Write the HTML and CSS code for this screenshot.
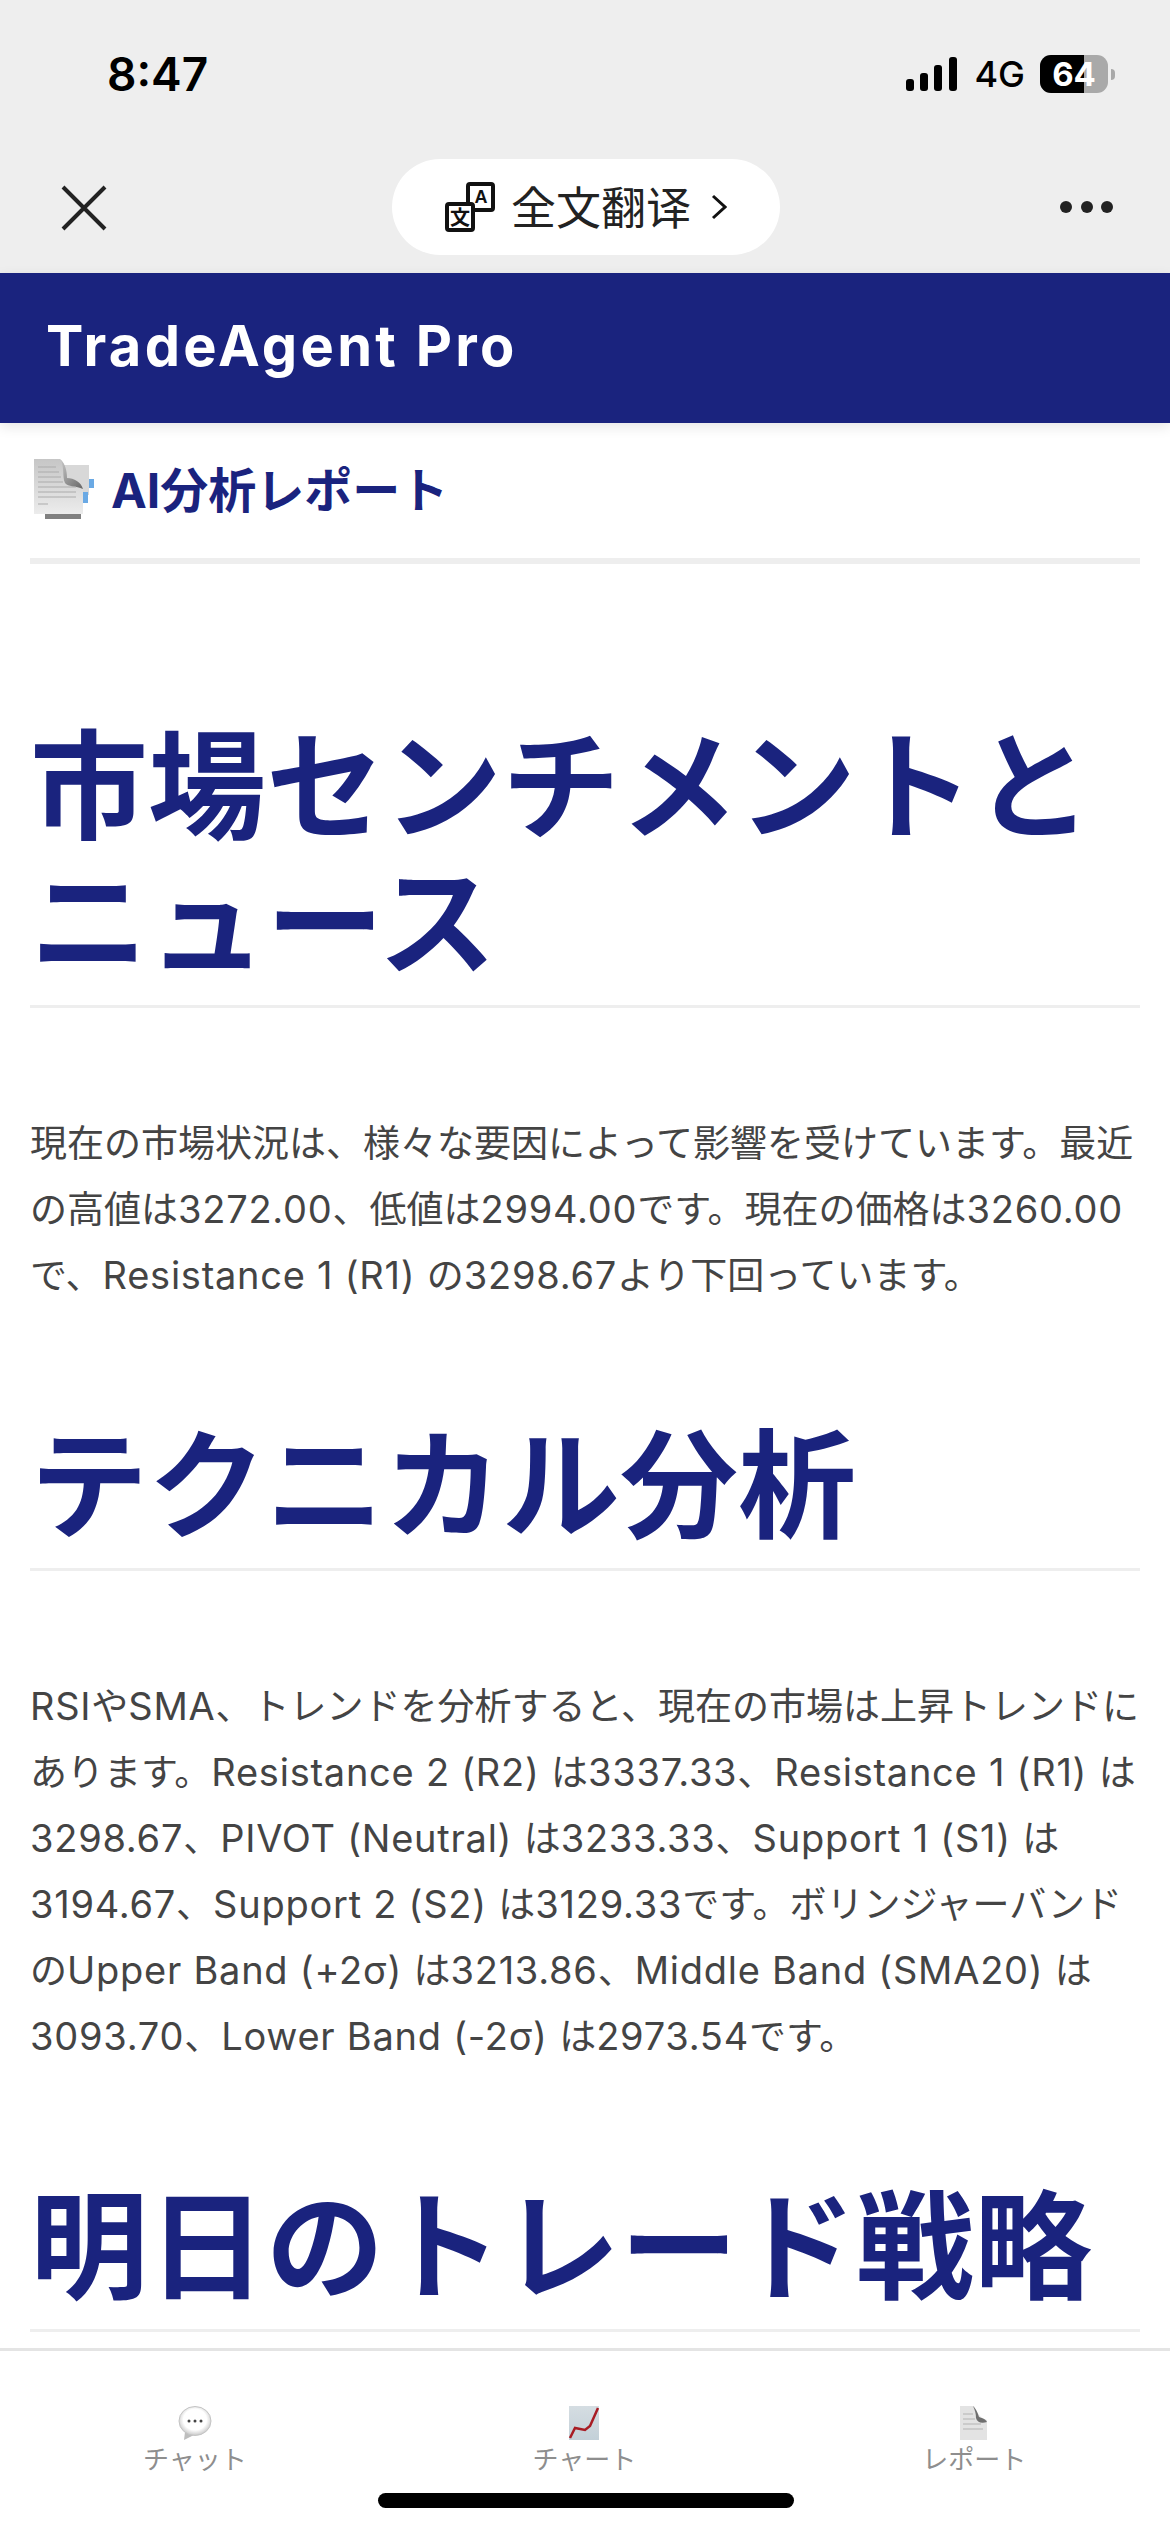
FILE: index.html
```html
<!DOCTYPE html>
<html lang="ja">
<head>
    <meta charset="UTF-8">
    <meta name="viewport" content="width=device-width, initial-scale=1.0">
    <title>TradeAgent Pro</title>
    <link rel="stylesheet" href="styles.css">
</head>
<body>
    <svg class="defs" width="0" height="0">
        <defs>
            <linearGradient id="paper" x1="0" y1="0" x2="0" y2="1">
                <stop offset="0" stop-color="#c6c6c6"/>
                <stop offset="1" stop-color="#ececec"/>
            </linearGradient>
            <linearGradient id="fold" x1="0" y1="0" x2="1" y2="1">
                <stop offset="0" stop-color="#c8c8c8"/>
                <stop offset="1" stop-color="#666666"/>
            </linearGradient>
            <linearGradient id="chartbg" x1="0" y1="0" x2="0" y2="1">
                <stop offset="0" stop-color="#d5dde2"/>
                <stop offset="1" stop-color="#c3d0d8"/>
            </linearGradient>
            <radialGradient id="bubble" cx="0.5" cy="0.45" r="0.6">
                <stop offset="0.6" stop-color="#ffffff"/>
                <stop offset="1" stop-color="#b9b9b9"/>
            </radialGradient>
        </defs>
    </svg>

    <div class="status-bar">
        <span class="time">8:47</span>
        <div class="status-right">
            <svg class="signal" width="51" height="34" viewBox="0 0 51 34">
                <rect x="0" y="22" width="8" height="12" rx="3"/>
                <rect x="14" y="16" width="8" height="18" rx="3"/>
                <rect x="28" y="8" width="8" height="26" rx="3"/>
                <rect x="43" y="0" width="8" height="34" rx="3"/>
            </svg>
            <span class="network">4G</span>
            <div class="battery"><div class="battery-fill"></div><span class="battery-num">64</span></div>
            <div class="battery-tip"></div>
        </div>
    </div>

    <div class="nav-bar">
        <svg class="close" width="46" height="46" viewBox="0 0 46 46">
            <path d="M2 2 L44 44 M44 2 L2 44" fill="none" stroke="#222" stroke-width="4"/>
        </svg>
        <div class="translate">
            <svg class="translate-icon" width="50" height="50" viewBox="0 0 50 50">
                <rect x="23" y="2" width="25" height="26" rx="2" fill="#fff" stroke="#111" stroke-width="4"/>
                <rect x="2" y="22" width="26" height="26" rx="2" fill="#fff" stroke="#111" stroke-width="4"/>
                <text class="icon-a" x="36" y="21">A</text>
                <text class="icon-wen" x="15" y="43">文</text>
            </svg>
            <span class="translate-label">全文翻译</span>
            <svg class="chevron" width="16" height="26" viewBox="0 0 16 26">
                <path d="M2 2 L14 13 L2 24" fill="none" stroke="#111" stroke-width="3"/>
            </svg>
        </div>
        <div class="dots"><i></i><i></i><i></i></div>
    </div>

    <header class="app-header">TradeAgent Pro</header>

    <main class="content">
        <div class="report-title">
            <svg class="doc-icon" width="60" height="60" viewBox="0 0 60 60">
                <rect x="28" y="6" width="27" height="30" fill="#d8d8d8"/>
                <rect x="11" y="54" width="36" height="6" fill="#808080"/>
                <path d="M0 0 H26 C31 4 33 12 33 19 C40 20 47 24 49 30 V55 H0 Z" fill="url(#paper)"/>
                <path d="M26 0 C31 4 33 12 33 19 C40 19 47 23 49 30 C42 27 34 28 31 24 C28 18 31 8 26 0 Z" fill="url(#fold)"/>
                <path d="M4 8 H22 M4 13 H25 M4 18 H27 M4 23 H29 M4 28 H42 M4 33 H42 M4 38 H42 M4 45 H14" stroke="#ababab" stroke-width="1.2"/>
                <rect x="55" y="20" width="5" height="9" fill="#6aa9e4"/>
                <rect x="49" y="33" width="5" height="11" fill="#6aa9e4"/>
            </svg>
            <h1 class="report-heading">AI分析レポート</h1>
        </div>

        <article class="report">
            <h2>市場センチメントとニュース</h2>
            <p>現在の市場状況は、様々な要因によって影響を受けています。最近の高値は<span class="en">3272.00</span>、低値は<span class="en">2994.00</span>です。現在の価格は<span class="en">3260.00</span>で、<span class="en">Resistance 1 (R1) </span>の<span class="en">3298.67</span>より下回っています。</p>
            <h2>テクニカル分析</h2>
            <p><span class="en">RSI</span>や<span class="en">SMA</span>、トレンドを分析すると、現在の市場は上昇トレンドにあります。<span class="en">Resistance 2 (R2) </span>は<span class="en">3337.33</span>、<span class="en">Resistance 1 (R1) </span>は<span class="en">3298.67</span>、<span class="en">PIVOT (Neutral) </span>は<span class="en">3233.33</span>、<span class="en">Support 1 (S1) </span>は<span class="en">3194.67</span>、<span class="en">Support 2 (S2) </span>は<span class="en">3129.33</span>です。ボリンジャーバンドの<span class="en">Upper Band (+2σ) </span>は<span class="en">3213.86</span>、<span class="en">Middle Band (SMA20) </span>は<span class="en">3093.70</span>、<span class="en">Lower Band (-2σ) </span>は<span class="en">2973.54</span>です。</p>
            <h2>明日のトレード戦略</h2>
        </article>
    </main>

    <nav class="tab-bar">
        <div class="tab">
            <svg width="34" height="34" viewBox="0 0 34 34">
                <path d="M7 26 L6 34 L16 29 Z" fill="#bdbdbd"/>
                <ellipse cx="17" cy="15" rx="16" ry="14.5" fill="url(#bubble)" stroke="#c4c4c4"/>
                <circle cx="11" cy="15" r="1.5" fill="#444"/>
                <circle cx="17" cy="15" r="1.5" fill="#444"/>
                <circle cx="23" cy="15" r="1.5" fill="#444"/>
            </svg>
            <span>チャット</span>
        </div>
        <div class="tab">
            <svg width="34" height="34" viewBox="0 0 34 34">
                <rect x="2" y="0" width="30" height="34" fill="url(#chartbg)"/>
                <path d="M3 32 L8 22 L18 24 L23 20 L31 2" fill="none" stroke="#a81c24" stroke-width="2.5"/>
            </svg>
            <span>チャート</span>
        </div>
        <div class="tab">
            <svg width="34" height="34" viewBox="0 0 34 34">
                <path d="M3 0 H17 C20 6 22 12 30 14 V34 H3 Z" fill="#e3e3e3"/>
                <path d="M16 0 C20 4 21 8 22 11 C24 12 28 12 30 16 C24 18 20 16 19 12 C19 8 18 4 16 0 Z" fill="#6f6f6f"/>
                <path d="M6 8 H16 M6 13 H18 M6 18 H24 M6 23 H26" stroke="#c4c4c4" stroke-width="1.5"/>
            </svg>
            <span>レポート</span>
        </div>
        <div class="home-indicator"></div>
    </nav>
</body>
</html>
```

FILE: styles.css
```css
:root {
    --navy: #1a237e;
    --chrome: #eeeeee;
    --latin: Inter, "Noto Sans CJK JP", sans-serif;
}

* {
    box-sizing: border-box;
}

body {
    margin: 0;
    width: 1170px;
    height: 2532px;
    overflow: hidden;
    display: flex;
    flex-direction: column;
    background: #ffffff;
    font-family: var(--latin);
}

.defs {
    position: absolute;
}

.status-bar {
    height: 146px;
    flex: none;
    background: var(--chrome);
    display: flex;
    justify-content: space-between;
    align-items: flex-start;
    padding: 46px 55px 0 107px;
}

.time {
    font-size: 46px;
    font-weight: 600;
    line-height: 56px;
    color: #000;
}

.status-right {
    display: flex;
    align-items: center;
    height: 56px;
}

.signal {
    fill: #000;
    margin-right: 17px;
}

.network {
    font-size: 36px;
    font-weight: 500;
    color: #000;
    margin-right: 15px;
}

.battery {
    position: relative;
    width: 68px;
    height: 38px;
    border-radius: 11px;
    background: #a9a9a9;
    overflow: hidden;
    text-align: center;
}

.battery-fill {
    width: 44px;
    height: 100%;
    background: #000;
}

.battery-num {
    position: absolute;
    left: 0;
    right: 0;
    top: 0;
    line-height: 38px;
    font-size: 33px;
    font-weight: 700;
    color: #fff;
}

.battery-tip {
    width: 4px;
    height: 11px;
    margin-left: 3px;
    background: #a9a9a9;
    border-radius: 0 4px 4px 0;
}

.nav-bar {
    height: 127px;
    flex: none;
    background: var(--chrome);
    display: flex;
    align-items: flex-start;
    padding: 13px 57px 0 61px;
}

.close {
    margin-top: 26px;
}

.translate {
    width: 388px;
    height: 96px;
    margin-left: 285px;
    border-radius: 48px;
    background: #fff;
    display: flex;
    align-items: center;
    padding: 0 0 0 53px;
}

.translate-icon {
    margin-right: 16px;
}

.icon-a {
    font: 700 18px "Liberation Sans", sans-serif;
    text-anchor: middle;
    fill: #111;
}

.icon-wen {
    font: 700 20px "Noto Sans CJK SC", sans-serif;
    text-anchor: middle;
    fill: #111;
}

.translate-label {
    font-family: "Noto Sans CJK SC", sans-serif;
    font-size: 45px;
    color: #222;
    margin: 0 20px 4px 0;
}

.dots {
    display: flex;
    gap: 8.5px;
    margin-top: 42px;
    margin-left: auto;
}

.dots i {
    width: 12px;
    height: 12px;
    border-radius: 50%;
    background: #222;
}

.app-header {
    height: 150px;
    flex: none;
    background: var(--navy);
    color: #fff;
    font-size: 56px;
    font-weight: 700;
    letter-spacing: 3.3px;
    line-height: 146px;
    padding-left: 46px;
    box-shadow: 0 4px 12px rgba(0, 0, 0, 0.1);
    position: relative;
}

.content {
    flex: 1;
    min-height: 0;
    overflow: hidden;
    padding: 0 30px;
}

.report-title {
    display: flex;
    align-items: center;
    height: 141px;
    border-bottom: 6px solid var(--chrome);
    padding: 0 0 8px 4px;
}

.doc-icon {
    margin-right: 17px;
    margin-top: 4px;
}

.report-heading {
    margin: 0;
    font-size: 48px;
    font-weight: 700;
    color: var(--navy);
    font-family: var(--latin);
}

.report h2 {
    margin: 0;
    padding: 0 0 14px;
    font-size: 118px;
    line-height: 136px;
    font-weight: 700;
    color: var(--navy);
    border-bottom: 3px solid var(--chrome);
}

.report h2:first-child {
    margin-top: 155px;
}

.report p {
    margin: 0;
    padding: 103px 0 109px;
    font-size: 37px;
    line-height: 66px;
    color: #444;
}

.report .en {
    font-size: 38px;
    line-height: 1;
    letter-spacing: 0.75px;
}

.tab-bar {
    height: 184px;
    flex: none;
    position: relative;
    background: #fff;
    border-top: 3px solid #e4e4e4;
    display: grid;
    grid-template-columns: repeat(3, 1fr);
    padding: 55px 1px 0 0;
    align-items: start;
}

.tab {
    display: flex;
    flex-direction: column;
    align-items: center;
    color: #8e8e8e;
    font-size: 26px;
    line-height: 34px;
}

.tab span {
    margin-top: 3px;
}

.home-indicator {
    position: absolute;
    left: 378px;
    top: 142px;
    width: 416px;
    height: 15px;
    border-radius: 8px;
    background: #000;
}
```
